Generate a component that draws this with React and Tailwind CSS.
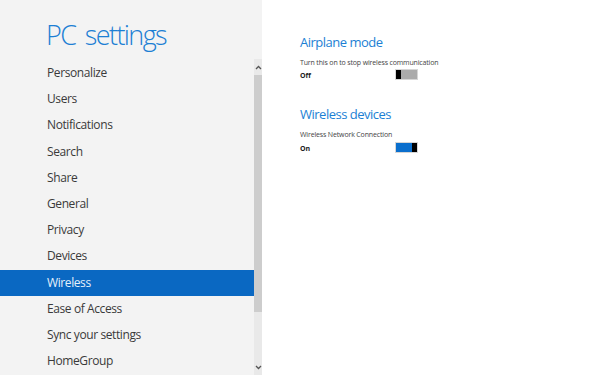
import React from "react";

const items = [
  "Personalize",
  "Users",
  "Notifications",
  "Search",
  "Share",
  "General",
  "Privacy",
  "Devices",
  "Wireless",
  "Ease of Access",
  "Sync your settings",
  "HomeGroup",
];

export default function App() {
  return (
    <div
      className="w-[600px] h-[375px] flex bg-white overflow-hidden"
      style={{ fontFamily: '"Open Sans", "Noto Sans", sans-serif' }}
    >
      <div className="w-[262px] h-full bg-[#f3f3f3] flex flex-col">
        <div className="h-[60px] pl-[46px] pt-[19px]">
          <div className="text-[27px] leading-[32px] font-light text-[#1c7fd4] tracking-[-1.6px] [word-spacing:4px]">
            PC settings
          </div>
        </div>
        <div className="flex flex-1 min-h-0">
          <div className="w-[254px] flex flex-col">
            {items.map((t) => (
              <div
                key={t}
                className={
                  "h-[26.2px] shrink-0 pl-[47px] flex items-center text-[12px] tracking-[-0.4px] " +
                  (t === "Wireless"
                    ? "bg-[#0a68c2] text-[#e6f0fa]"
                    : "text-[#3a3a3a]")
                }
              >
                {t}
              </div>
            ))}
          </div>
          <div className="w-[8px] bg-[#e9e9e9] flex flex-col -mt-[1px]">
            <div className="h-[16px] flex items-center justify-center">
              <svg width="7" height="5" viewBox="0 0 7 5">
                <path d="M1 4 L3.5 1.5 L6 4" stroke="#555" strokeWidth="1.3" fill="none" />
              </svg>
            </div>
            <div className="h-[237px] bg-[#cdcdcd]" />
            <div className="flex-1" />
            <div className="h-[16px] flex items-center justify-center">
              <svg width="7" height="5" viewBox="0 0 7 5">
                <path d="M1 1 L3.5 3.5 L6 1" stroke="#555" strokeWidth="1.3" fill="none" />
              </svg>
            </div>
          </div>
        </div>
      </div>
      <div className="flex-1 pl-[38px] pt-[34px]">
        <div className="text-[13px] leading-[17px] text-[#1c7fd4] tracking-[-0.5px]">Airplane mode</div>
        <div className="mt-[7px] text-[7px] leading-[9px] text-[#444] tracking-[-0.15px]">
          Turn this on to stop wireless communication
        </div>
        <div className="flex items-end mt-[1px] h-[12px]">
          <div className="w-[95px] text-[7px] leading-[9px] font-bold text-[#222]">Off</div>
          <div className="w-[23px] h-[11px] border border-[#d6d6d6] bg-[#ababab] flex">
            <div className="w-[5px] h-full bg-black" />
          </div>
        </div>
        <div className="mt-[26px] text-[13px] leading-[17px] text-[#1c7fd4] tracking-[-0.5px]">Wireless devices</div>
        <div className="mt-[7px] text-[7px] leading-[9px] text-[#444] tracking-[-0.15px]">
          Wireless Network Connection
        </div>
        <div className="flex items-end mt-[2px] h-[12px]">
          <div className="w-[95px] text-[7px] leading-[9px] font-bold text-[#222]">On</div>
          <div className="w-[23px] h-[11px] border border-[#d6d6d6] bg-[#0b6fcd] flex justify-end">
            <div className="w-[5px] h-full bg-black" />
          </div>
        </div>
      </div>
    </div>
  );
}
